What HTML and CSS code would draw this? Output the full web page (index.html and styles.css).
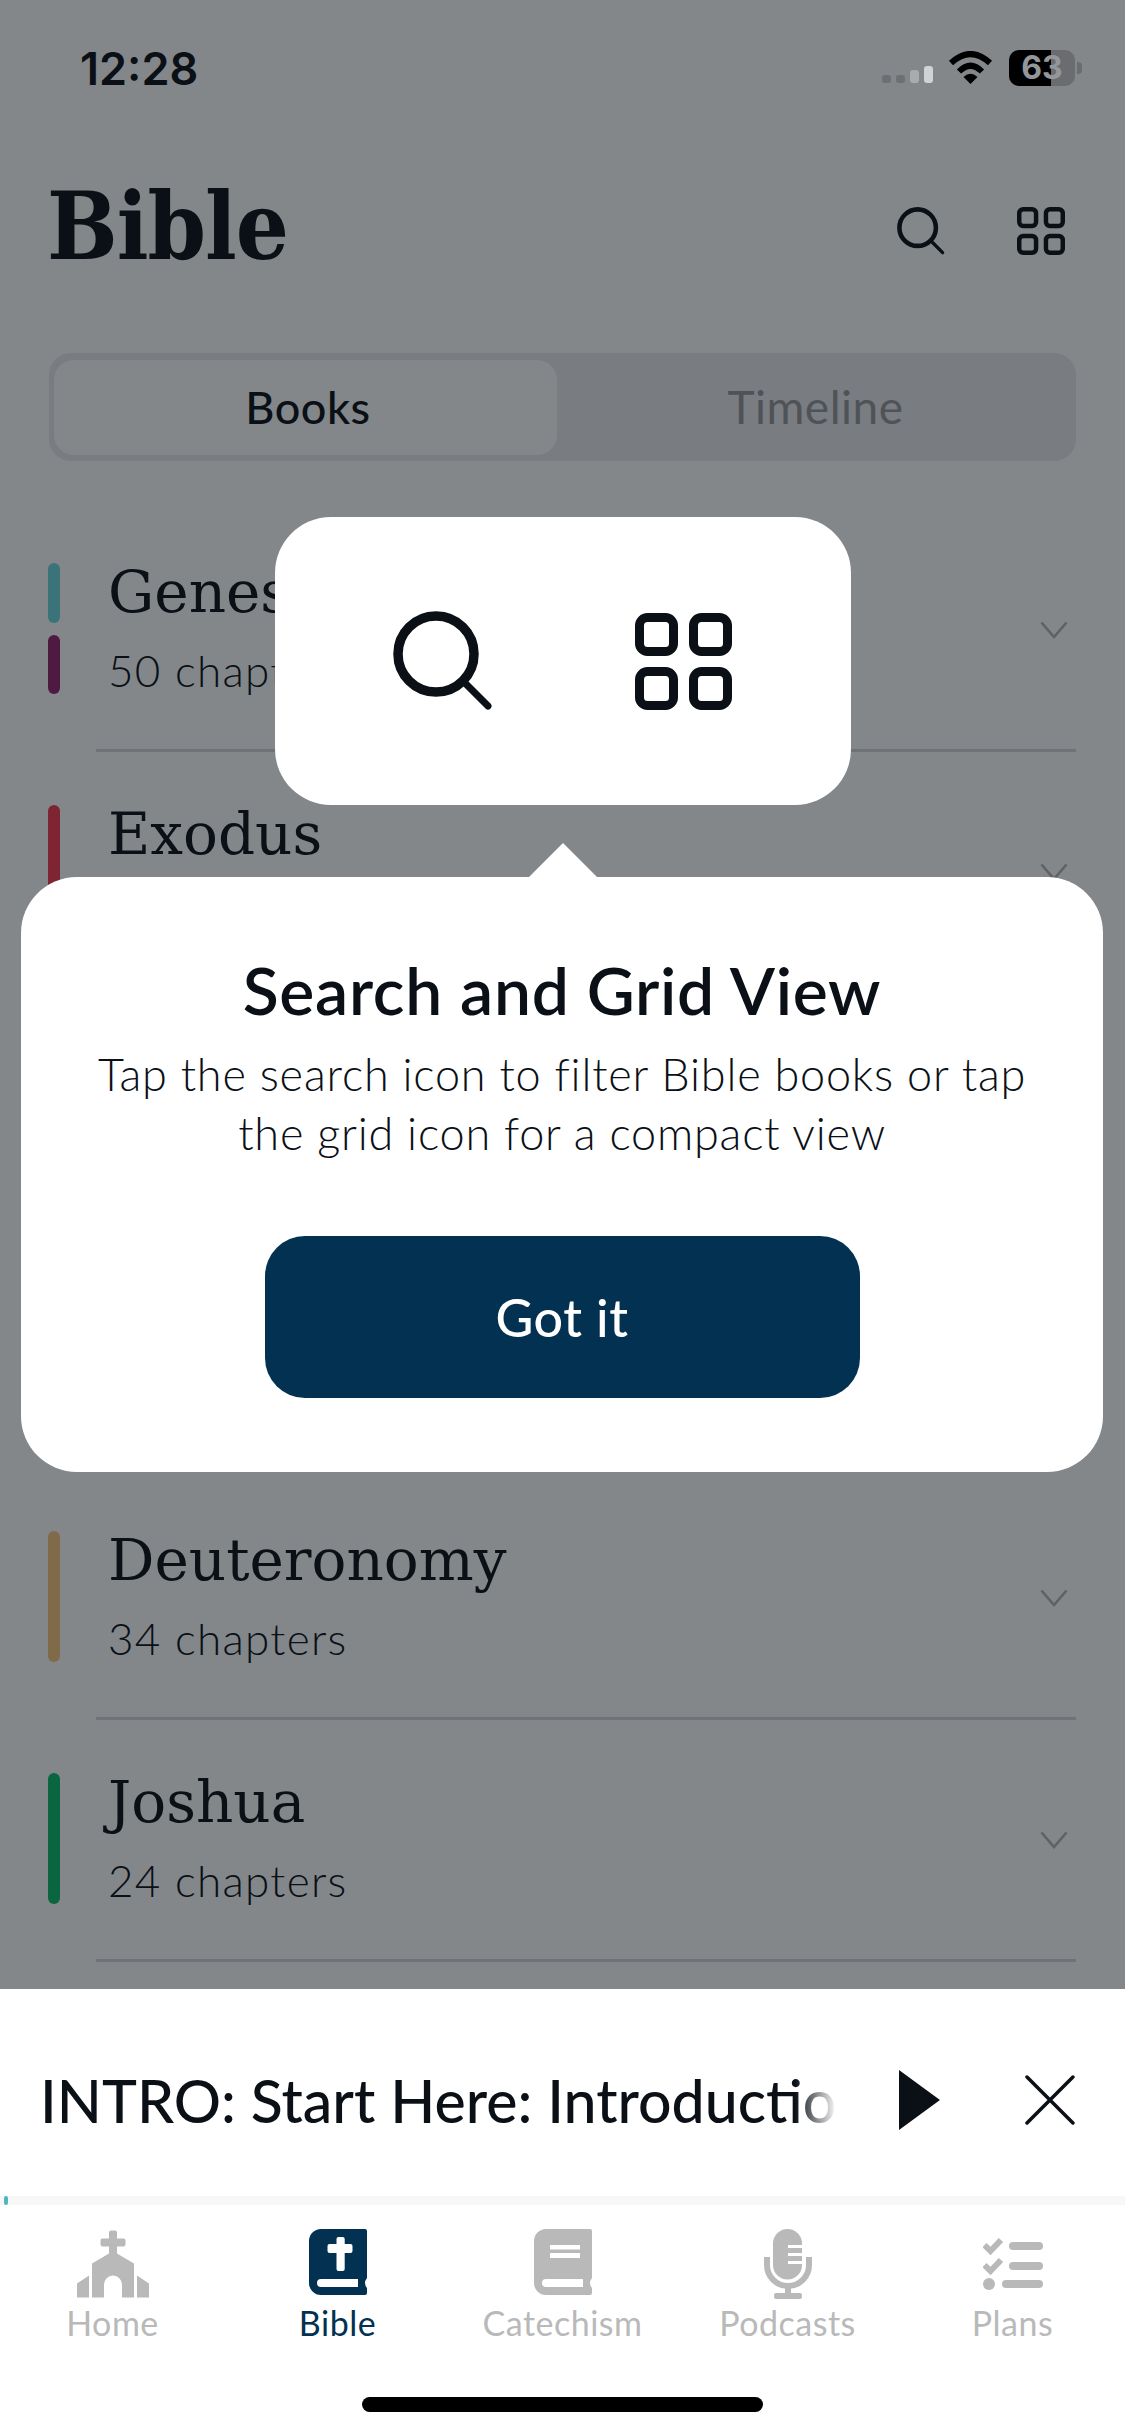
FILE: index.html
```html
<!DOCTYPE html>
<html lang="en">
<head>
    <meta charset="UTF-8">
    <title>Bible</title>
    <link rel="stylesheet" href="styles.css">
</head>
<body>

<svg class="defs" width="0" height="0">
    <symbol id="icon-search" viewBox="0 0 100 100">
        <circle cx="43" cy="43" r="38" fill="none" stroke="currentColor" stroke-width="9.5"/>
        <path d="M72 72 L95 95" fill="none" stroke="currentColor" stroke-width="7" stroke-linecap="round"/>
    </symbol>
    <symbol id="icon-grid" viewBox="0 0 97 97">
        <g fill="none" stroke="currentColor" stroke-width="9">
            <rect x="4.5" y="4.5" width="34" height="34" rx="8"/>
            <rect x="58.5" y="4.5" width="34" height="34" rx="8"/>
            <rect x="4.5" y="58.5" width="34" height="34" rx="8"/>
            <rect x="58.5" y="58.5" width="34" height="34" rx="8"/>
        </g>
    </symbol>
    <symbol id="icon-chevron" viewBox="0 0 28 18">
        <path d="M1.5 1.5 L14 16 L26.5 1.5" fill="none" stroke="currentColor" stroke-width="2.6"/>
    </symbol>
    <symbol id="icon-book" viewBox="0 0 58 66">
        <path fill="currentColor" d="M12 0 H56 a2 2 0 0 1 2 2 V49 Q54 54 58 59 V64 a2 2 0 0 1 -2 2 H12 A12 12 0 0 1 0 54 V12 A12 12 0 0 1 12 0 Z"/>
    </symbol>
</svg>

<div class="screen">
    <div class="status">
        <span class="clock">12:28</span>
        <div class="status-icons">
            <div class="signal">
                <i class="sig sig1"></i>
                <i class="sig sig2"></i>
                <i class="sig sig3"></i>
                <i class="sig sig4"></i>
            </div>
            <svg class="wifi" viewBox="0 0 45 33">
                <path d="M3 12 Q22.500 -6 42 12" fill="none" stroke="#000" stroke-width="6"/>
                <path d="M11 20.500 Q22.500 9 34 20.500" fill="none" stroke="#000" stroke-width="6"/>
                <path d="M15.500 26 Q22.500 19.500 29.500 26 L22.500 33 Z" fill="#000"/>
            </svg>
            <div class="battery">
                <div class="battery-body"><span class="battery-level"></span><span class="battery-num">63</span></div>
                <i class="battery-nub"></i>
            </div>
        </div>
    </div>

    <div class="header">
        <h1>Bible</h1>
        <div class="header-icons">
            <svg class="head-search"><use href="#icon-search"/></svg>
            <svg class="head-grid"><use href="#icon-grid"/></svg>
        </div>
    </div>

    <div class="segment">
        <div class="seg active">Books</div>
        <div class="seg">Timeline</div>
    </div>

    <div class="book-list">
        <div class="book">
            <div class="bars">
                <i class="bar teal"></i>
                <i class="bar purple"></i>
            </div>
            <div class="book-body">
                <div>
                    <div class="book-name">Genesis</div>
                    <div class="book-sub">50 chapters</div>
                </div>
                <svg class="chevron"><use href="#icon-chevron"/></svg>
            </div>
        </div>
        <div class="book">
            <div class="bars"><i class="bar red"></i></div>
            <div class="book-body">
                <div>
                    <div class="book-name">Exodus</div>
                </div>
                <svg class="chevron"><use href="#icon-chevron"/></svg>
            </div>
        </div>
        <!-- these two sit fully under the tip card -->
        <div class="book"></div>
        <div class="book"></div>
        <div class="book">
            <div class="bars"><i class="bar tan"></i></div>
            <div class="book-body">
                <div>
                    <div class="book-name">Deuteronomy</div>
                    <div class="book-sub">34 chapters</div>
                </div>
                <svg class="chevron"><use href="#icon-chevron"/></svg>
            </div>
        </div>
        <div class="book">
            <div class="bars"><i class="bar green"></i></div>
            <div class="book-body">
                <div>
                    <div class="book-name">Joshua</div>
                    <div class="book-sub">24 chapters</div>
                </div>
                <svg class="chevron"><use href="#icon-chevron"/></svg>
            </div>
        </div>
    </div>

    <div class="player">
        <div class="player-title">INTRO: Start Here: Introductio</div>
        <svg class="play" viewBox="0 0 41 60"><path d="M0 0 L41 30 L0 60 Z" fill="currentColor"/></svg>
        <svg class="close" viewBox="0 0 50 50"><path d="M2 2 L48 48 M48 2 L2 48" fill="none" stroke="currentColor" stroke-width="3.500" stroke-linecap="round"/></svg>
    </div>
    <div class="progress"><i class="progress-dot"></i></div>

    <div class="tabs">
        <div class="tab">
            <svg class="tab-icon" viewBox="0 0 72 67" width="72" height="67">
                <path fill="currentColor" d="M32 2 a2 2 0 0 1 2 -2 h4 a2 2 0 0 1 2 2 V8 H46.500 a2 2 0 0 1 2 2 v4 a2 2 0 0 1 -2 2 H40 V23 L57 33 V67 H45 V54 A9 9 0 0 0 27 54 V67 H15 V33 L32 23 V16 H25.500 a2 2 0 0 1 -2 -2 v-4 a2 2 0 0 1 2 -2 H32 Z"/>
                <path fill="currentColor" d="M0 53 L12 45 V67 H0 Z M60 45 L72 53 V67 H60 Z"/>
            </svg>
            <span>Home</span>
        </div>
        <div class="tab current">
            <svg class="tab-icon" viewBox="0 0 58 66" width="58" height="66" preserveAspectRatio="xMidYMin">
                <use href="#icon-book"/>
                <path fill="#fff" d="M27.500 10 a2 2 0 0 1 2 -2 h4.200 a2 2 0 0 1 2 2 V15 H41.500 a2 2 0 0 1 2 2 v5 a2 2 0 0 1 -2 2 H35.700 V40 a2 2 0 0 1 -2 2 h-4.200 a2 2 0 0 1 -2 -2 V24 H20.500 a2 2 0 0 1 -2 -2 v-5 a2 2 0 0 1 2 -2 H27.500 Z"/>
                <path fill="#fff" d="M12 50 H49 V58 H12 a4 4 0 0 1 0 -8 Z"/>
            </svg>
            <span>Bible</span>
        </div>
        <div class="tab">
            <svg class="tab-icon" viewBox="0 0 58 66" width="58" height="66" preserveAspectRatio="xMidYMin">
                <use href="#icon-book"/>
                <path fill="#fff" d="M16 16 H46 V20.500 H16 Z M16 24 H46 V29 H16 Z"/>
                <path fill="#fff" d="M12 50 H49 V58 H12 a4 4 0 0 1 0 -8 Z"/>
            </svg>
            <span>Catechism</span>
        </div>
        <div class="tab">
            <svg class="tab-icon" viewBox="0 0 48 70" width="48" height="70">
                <path fill="currentColor" d="M9 14.500 a14.500 14.500 0 0 1 29 0 V36 a14.500 14.500 0 0 1 -29 0 Z"/>
                <path fill="#fff" d="M24 16 H38 V19 H24 Z M24 24 H38 V27 H24 Z M24 32 H38 V35 H24 Z"/>
                <path fill="none" stroke="currentColor" stroke-width="6" d="M3 28 V36 A21 21 0 0 0 45 36 V28"/>
                <path fill="currentColor" d="M21 56 H27 V64 H36 a2 2 0 0 1 2 2 v2 a2 2 0 0 1 -2 2 H12 a2 2 0 0 1 -2 -2 v-2 a2 2 0 0 1 2 -2 H21 Z"/>
            </svg>
            <span>Podcasts</span>
        </div>
        <div class="tab">
            <svg class="tab-icon plans-icon" viewBox="0 0 60 52" width="60" height="52">
                <path fill="none" stroke="currentColor" stroke-width="6" d="M1.500 7 L7.500 13 L18 2 M1.500 27 L7.500 33 L18 22"/>
                <circle cx="6" cy="46" r="6" fill="currentColor"/>
                <rect x="26" y="4" width="34" height="8" rx="4" fill="currentColor"/>
                <rect x="26" y="24" width="34" height="8" rx="4" fill="currentColor"/>
                <rect x="19" y="42" width="41" height="8" rx="4" fill="currentColor"/>
            </svg>
            <span>Plans</span>
        </div>
    </div>
    <div class="home-bar"><i></i></div>

    <!-- tutorial overlay -->
    <div class="spotlight">
        <svg class="spot-search"><use href="#icon-search"/></svg>
        <svg class="spot-grid"><use href="#icon-grid"/></svg>
    </div>
    <div class="tip">
        <i class="tip-arrow"></i>
        <div class="tip-title">Search and Grid View</div>
        <p class="tip-text">Tap the search icon to filter Bible books or tap<br>the grid icon for a compact view</p>
        <div class="tip-btn">Got it</div>
    </div>
</div>

</body>
</html>
```

FILE: styles.css
```css
* {
    box-sizing: border-box;
}
body {
    margin: 0;
    font-family: "Lato", "Liberation Sans", sans-serif;
    color: #0a1016;
}
.defs {
    position: absolute;
}
i {
    display: block;
}
.screen {
    position: relative;
    width: 1125px;
    height: 2436px;
    overflow: hidden;
    background-color: #83878a;
    display: flex;
    flex-direction: column;
}

/* status bar */
.status {
    height: 136px;
    padding: 43px 43px 0 80px;
    display: flex;
    justify-content: space-between;
}
.clock {
    font-family: "Inter", sans-serif;
    font-weight: 600;
    font-size: 45px;
    line-height: 52px;
}
.status-icons {
    display: flex;
    height: 54px;
    padding-top: 8px;
}
.signal {
    display: flex;
    align-items: flex-end;
    gap: 5px;
    height: 33px;
    padding-bottom: 1px;
    margin-right: 15px;
}
.sig {
    width: 9px;
    border-radius: 3px;
}
.sig1, .sig2 {
    height: 8px;
    background-color: #6c6f73;
}
.sig3 {
    height: 13px;
    background-color: #a9acae;
}
.sig4 {
    height: 17px;
    background-color: #d0d2d3;
}
.wifi {
    width: 45px;
    height: 33px;
    margin-right: 16px;
}
.battery {
    display: flex;
    align-items: center;
    height: 36px;
    margin-top: -1px;
}
.battery-body {
    position: relative;
    width: 66px;
    height: 36px;
    border-radius: 10px;
    background-color: #6a6c6f;
}
.battery-level {
    position: absolute;
    left: 0;
    top: 0;
    bottom: 0;
    width: 42px;
    border-radius: 10px 0 0 10px;
    background-color: #000;
}
.battery-num {
    position: absolute;
    inset: 0;
    text-align: center;
    font-family: "Inter", sans-serif;
    font-weight: 700;
    font-size: 32px;
    line-height: 36px;
    color: #94979a;
}
.battery-nub {
    width: 5px;
    height: 12px;
    margin-left: 2px;
    border-radius: 0 4px 4px 0;
    background-color: #6a6c6f;
}

/* title row */
.header {
    height: 217px;
    padding: 0 49px 0 47px;
    display: flex;
    justify-content: space-between;
}
h1 {
    margin: 36px 0 0;
    font-family: "DejaVu Serif", serif;
    font-stretch: condensed;
    font-weight: 700;
    font-size: 93px;
    line-height: 110px;
    letter-spacing: -1px;
}
.header-icons {
    display: flex;
    gap: 72px;
    padding: 71px 11px 0 0;
}
.head-search {
    width: 48px;
    height: 48px;
}
.head-grid {
    width: 48px;
    height: 48px;
}

/* Books / Timeline */
.segment {
    margin: 0 49px;
    height: 108px;
    padding: 7px 7px 6px 5px;
    border-radius: 22px;
    background-color: #797c80;
    display: flex;
    flex-shrink: 0;
}
.seg {
    flex: 1;
    padding-left: 5px;
    text-align: center;
    font-size: 46px;
    line-height: 94px;
    letter-spacing: 0.5px;
    color: #4f5357;
}
.seg.active {
    flex: 0 0 503px;
    color: #0a1016;
    font-size: 45px;
    font-weight: 500;
    background-color: #83878a;
    border-radius: 20px;
}

/* list */
.book-list {
    flex: 1;
    min-height: 0;
    overflow: hidden;
    margin-top: 49px;
}
.book {
    display: flex;
    height: 242px;
    padding-left: 48px;
}
.bars {
    width: 12px;
    height: 131px;
    margin-top: 53px;
    display: flex;
    flex-direction: column;
    gap: 12px;
    flex-shrink: 0;
}
.bar {
    flex: 1;
    border-radius: 6px;
}
.teal { background-color: #3a7479; }
.purple { background-color: #4f1a42; }
.red { background-color: #7e2432; }
.tan { background-color: #7f6b4a; }
.green { background-color: #0a6640; }
.book-body {
    margin: 0 49px 0 36px;
    flex: 1;
    padding: 0 8px 0 12px;
    border-bottom: 3px solid #6f7276;
    display: flex;
    justify-content: space-between;
    align-items: flex-start;
}
.book-name {
    margin-top: 46px;
    font-family: "DejaVu Serif", serif;
    font-size: 58px;
    line-height: 72px;
}
.book-sub {
    margin-top: 18px;
    font-size: 44px;
    line-height: 48px;
    font-weight: 300;
    letter-spacing: 1.3px;
}
.chevron {
    width: 28px;
    height: 18px;
    margin-top: 111px;
    color: #5e6165;
}

/* mini player */
.player {
    height: 207px;
    flex-shrink: 0;
    background-color: #fff;
    padding: 15px 50px 0 40px;
    display: flex;
    align-items: center;
}
.player-title {
    width: 820px;
    white-space: nowrap;
    font-size: 59px;
    font-weight: 500;
    -webkit-mask-image: linear-gradient(to right, #000 755px, transparent 797px);
    mask-image: linear-gradient(to right, #000 755px, transparent 797px);
}
.play {
    width: 41px;
    height: 60px;
    margin: 0 85px 0 40px;
}
.close {
    width: 50px;
    height: 50px;
}
.progress {
    height: 9px;
    flex-shrink: 0;
    background-color: #f7f7f7;
    padding-left: 4px;
}
.progress-dot {
    width: 4px;
    height: 9px;
    border-radius: 2px;
    background-color: #4fb7bd;
}

/* tab bar */
.tabs {
    height: 192px;
    flex-shrink: 0;
    background-color: #fff;
    display: flex;
    padding-top: 24px;
}
.tab {
    flex: 1;
    display: flex;
    flex-direction: column;
    align-items: center;
    color: #b9b9b9;
    font-size: 34px;
    line-height: 42px;
    letter-spacing: 0.5px;
}
.tab-icon {
    height: 70px;
    margin-bottom: 3px;
}
.tab.current {
    color: #023152;
}
.home-bar {
    height: 39px;
    flex-shrink: 0;
    background-color: #fff;
}
.home-bar i {
    width: 401px;
    height: 15px;
    margin: 0 auto;
    border-radius: 8px;
    background-color: #000;
}

/* overlay */
.spotlight {
    position: absolute;
    left: 275px;
    top: 517px;
    width: 576px;
    height: 288px;
    border-radius: 56px;
    background-color: #fff;
    display: flex;
    align-items: center;
    gap: 142px;
    padding: 0 0 0 118px;
}
.spot-search {
    width: 100px;
    height: 100px;
}
.spot-grid {
    width: 97px;
    height: 97px;
}
.tip {
    position: absolute;
    left: 21px;
    top: 877px;
    width: 1082px;
    height: 595px;
    border-radius: 56px;
    background-color: #fff;
    text-align: center;
    padding-top: 74px;
}
.tip-arrow {
    position: absolute;
    left: 508px;
    top: -34px;
    width: 0;
    height: 0;
    border-left: 34px solid transparent;
    border-right: 34px solid transparent;
    border-bottom: 34px solid #fff;
}
.tip-title {
    font-size: 66px;
    line-height: 78px;
    font-weight: 600;
    letter-spacing: 0.7px;
}
.tip-text {
    margin: 16px 0 0;
    font-size: 45px;
    line-height: 59px;
    font-weight: 300;
    letter-spacing: 0.8px;
}
.tip-btn {
    width: 595px;
    height: 162px;
    margin: 73px auto 0;
    border-radius: 40px;
    background-color: #023152;
    color: #fff;
    font-size: 52px;
    line-height: 162px;
    font-weight: 500;
    letter-spacing: 0.5px;
}
```
